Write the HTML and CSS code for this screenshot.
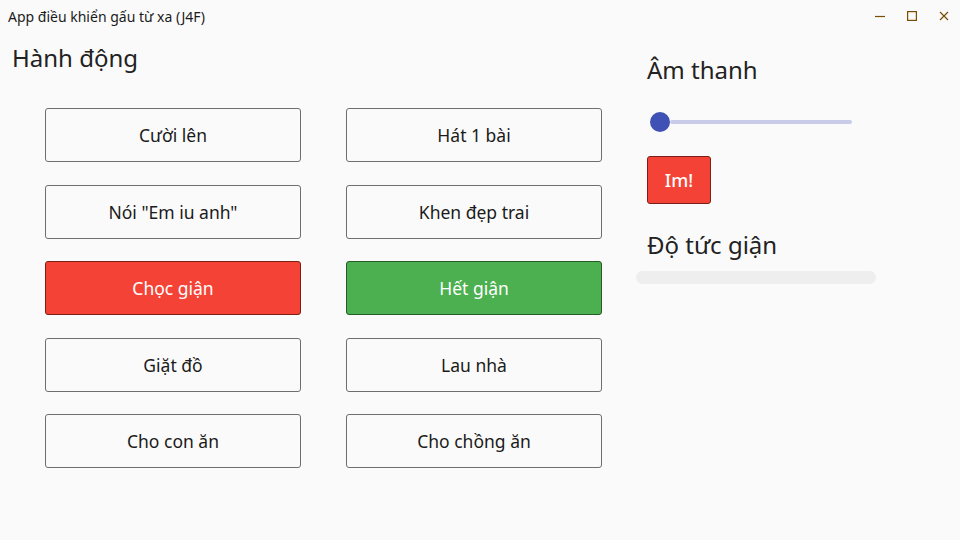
FILE: index.html
```html
<!DOCTYPE html>
<html lang="vi">
<head>
<meta charset="utf-8">
<title>App điều khiển gấu từ xa (J4F)</title>
<link rel="stylesheet" href="styles.css">
</head>
<body>
<div class="window">
  <header class="titlebar">
    <span class="title">App điều khiển gấu từ xa (J4F)</span>
    <div class="controls">
      <span class="ctl"><svg width="12" height="12" viewBox="0 0 12 12"><path d="M1 6.5h10" stroke="#7a4d00" stroke-width="1.2"/></svg></span>
      <span class="ctl"><svg width="12" height="12" viewBox="0 0 12 12"><rect x="1.6" y="1.6" width="8.8" height="8.8" fill="none" stroke="#7a4d00" stroke-width="1.2"/></svg></span>
      <span class="ctl"><svg width="12" height="12" viewBox="0 0 12 12"><path d="M2 2l8 8M10 2l-8 8" stroke="#7a4d00" stroke-width="1.2"/></svg></span>
    </div>
  </header>
  <main class="content">
    <section class="actions">
      <h2 class="heading">Hành động</h2>
      <div class="grid">
        <button class="btn">Cười lên</button>
        <button class="btn">Hát 1 bài</button>
        <button class="btn">Nói "Em iu anh"</button>
        <button class="btn">Khen đẹp trai</button>
        <button class="btn btn-red">Chọc giận</button>
        <button class="btn btn-green">Hết giận</button>
        <button class="btn">Giặt đồ</button>
        <button class="btn">Lau nhà</button>
        <button class="btn">Cho con ăn</button>
        <button class="btn">Cho chồng ăn</button>
      </div>
    </section>
    <aside class="side">
      <h2 class="heading side-h">Âm thanh</h2>
      <div class="slider">
        <span class="thumb"></span>
        <span class="track"></span>
      </div>
      <button class="im">Im!</button>
      <h2 class="heading side-h anger">Độ tức giận</h2>
      <div class="progress"></div>
    </aside>
  </main>
</div>
</body>
</html>
```
FILE: styles.css
```css
* { box-sizing: border-box; }
html, body { margin: 0; padding: 0; }
body {
  width: 960px;
  height: 540px;
  background: #fafafa;
  font-family: "Noto Sans", "Open Sans", sans-serif;
  color: #1b1b1b;
  overflow: hidden;
}
.window { display: flex; flex-direction: column; height: 540px; }
.titlebar {
  height: 32px;
  display: flex;
  align-items: center;
  justify-content: space-between;
  padding-left: 8px;
}
.title { font-size: 14px; color: #1b1b1b; }
.controls { display: flex; }
.ctl {
  width: 32px;
  height: 32px;
  display: flex;
  align-items: center;
  justify-content: center;
}
.content { display: flex; flex: 1; }
.actions { width: 636px; padding-left: 12px; }
.heading {
  margin: 0;
  font-weight: 400;
  font-size: 24px;
  line-height: 32px;
  color: #222;
}
.actions .heading { margin-top: 10px; }
.grid {
  margin-top: 34px;
  margin-left: 33px;
  display: grid;
  grid-template-columns: 256px 256px;
  column-gap: 45px;
  row-gap: 22.5px;
}
.btn {
  height: 54px;
  border: 1px solid #6e6e6e;
  border-radius: 3px;
  background: #fafafa;
  font-family: inherit;
  font-size: 17.5px;
  color: #1b1b1b;
  padding: 0;
}
.btn-red { background: #f44336; color: #fff; border-color: #7a1f17; }
.btn-green { background: #4caf50; color: #fff; border-color: #255928; }
.side { display: flex; flex-direction: column; align-items: flex-start; }
.side-h { margin-left: 11px; }
.side > .side-h:first-child { margin-top: 22px; }
.slider {
  margin-top: 26px;
  margin-left: 14px;
  width: 202px;
  height: 20px;
  display: flex;
  align-items: center;
}
.thumb {
  width: 20px;
  height: 20px;
  border-radius: 50%;
  background: #3f51b5;
  flex: none;
}
.track {
  flex: 1;
  height: 4px;
  background: #c8cce9;
  border-radius: 2px;
}
.im {
  margin-top: 24px;
  margin-left: 11px;
  width: 64px;
  height: 48px;
  background: #f44336;
  color: #fff;
  border: 1px solid #7a1f17;
  border-radius: 3px;
  font-family: inherit;
  font-size: 18px;
  font-weight: 500;
  padding: 0;
}
.anger { margin-top: 25px; }
.progress {
  margin-top: 10px;
  width: 240px;
  height: 13px;
  border-radius: 7px;
  background: #eeeeee;
}
```
